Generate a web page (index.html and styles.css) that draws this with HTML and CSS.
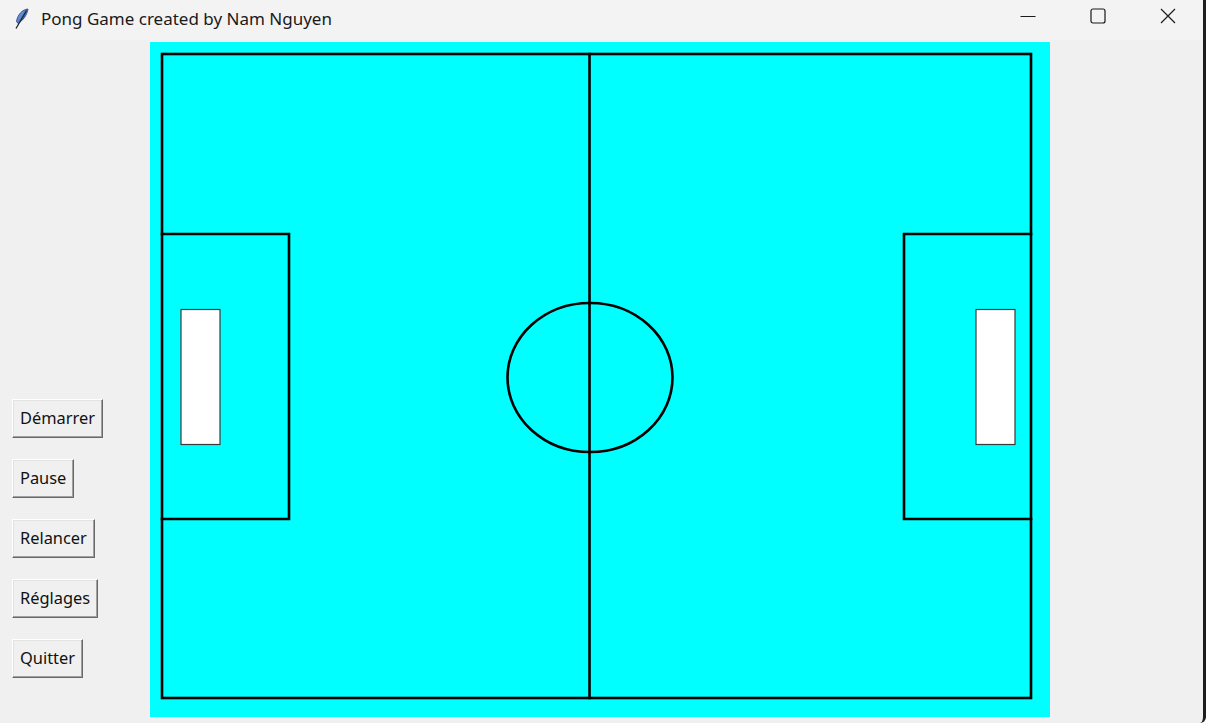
FILE: index.html
```html
<!DOCTYPE html>
<html lang="fr">
<head>
<meta charset="utf-8">
<title>Pong Game created by Nam Nguyen</title>
<link rel="stylesheet" href="styles.css">
</head>
<body>
<div class="window">
  <header class="titlebar">
    <div class="title">
      <svg class="app-icon" width="16" height="22" viewBox="0 0 16 22">
        <defs>
          <linearGradient id="fg" x1="0" y1="0" x2="1" y2="1">
            <stop offset="0" stop-color="#8ab8f5"/>
            <stop offset="1" stop-color="#1f4fa8"/>
          </linearGradient>
        </defs>
        <path d="M15 1 C9 1.5 4.5 7 3.5 13.5 L5 15.5 C10 12.5 14 7 15 1 Z" fill="url(#fg)" stroke="#1b3b7a" stroke-width="0.8"/>
        <path d="M13.5 2.5 L3 20.5" stroke="#222" stroke-width="1.3" fill="none"/>
      </svg>
      <span class="title-text">Pong Game created by Nam Nguyen</span>
    </div>
    <div class="controls">
      <span class="ctl">
        <svg width="16" height="16" viewBox="0 0 16 16"><path d="M0.5 8.5 H15.5" stroke="#1a1a1a" stroke-width="1"/></svg>
      </span>
      <span class="ctl">
        <svg width="16" height="16" viewBox="0 0 16 16"><rect x="1" y="1" width="14" height="14" rx="2" fill="none" stroke="#1a1a1a" stroke-width="1.2"/></svg>
      </span>
      <span class="ctl">
        <svg width="16" height="16" viewBox="0 0 16 16"><path d="M1 1 L15 15 M15 1 L1 15" stroke="#1a1a1a" stroke-width="1.2"/></svg>
      </span>
    </div>
  </header>
  <main class="content">
    <nav class="menu">
      <button class="btn">Démarrer</button>
      <button class="btn">Pause</button>
      <button class="btn">Relancer</button>
      <button class="btn">Réglages</button>
      <button class="btn">Quitter</button>
    </nav>
    <svg class="pitch" width="900" height="675" viewBox="0 0 900 675">
      <rect x="0" y="0" width="900" height="675" fill="#00ffff"/>
      <g stroke="#000" stroke-width="2.6" fill="none" stroke-linecap="square">
        <rect x="12" y="12" width="869" height="644"/>
        <line x1="439.5" y1="12" x2="439.5" y2="656"/>
        <ellipse cx="440" cy="335.5" rx="82.5" ry="74.5"/>
        <polyline points="12,192 139,192 139,477 12,477"/>
        <polyline points="881,192 754,192 754,477 881,477"/>
      </g>
      <rect x="31" y="267.5" width="39" height="135" fill="#fff" stroke="#3a3a3a" stroke-width="1.2"/>
      <rect x="826" y="267.5" width="39" height="135" fill="#fff" stroke="#3a3a3a" stroke-width="1.2"/>
    </svg>
  </main>
</div>
</body>
</html>
```

FILE: styles.css
```css
html, body {
  margin: 0;
  padding: 0;
  width: 1206px;
  height: 723px;
  overflow: hidden;
  background: #ffffff;
}

.window {
  width: 1203px;
  height: 723px;
  background: #f0f0f0;
  border-right: 3px solid #1e1e1e;
  border-bottom-right-radius: 6px;
  display: flex;
  flex-direction: column;
  font-family: "Noto Sans", "Open Sans", sans-serif;
}

.titlebar {
  height: 40px;
  background: #f3f3f3;
  display: flex;
  align-items: center;
  justify-content: space-between;
}

.title {
  display: flex;
  align-items: center;
  padding-left: 13px;
}

.app-icon {
  display: block;
  margin-top: -2px;
}

.title-text {
  margin-left: 12px;
  font-size: 17px;
  color: #1a1a1a;
  margin-top: -3px;
}

.controls {
  display: flex;
  align-items: center;
  height: 100%;
  margin-right: 0;
}

.ctl {
  width: 70px;
  display: flex;
  justify-content: center;
  align-items: center;
  margin-top: -8px;
}

.ctl svg {
  display: block;
}

.content {
  flex: 1;
  display: flex;
  align-items: flex-start;
}

.menu {
  width: 150px;
  display: flex;
  flex-direction: column;
  align-items: flex-start;
  gap: 21px;
  padding-top: 359px;
  padding-left: 12px;
  box-sizing: border-box;
}

.btn {
  height: 39px;
  padding: 0 7px;
  margin: 0;
  background: #f0f0f0;
  font-family: "Noto Sans", "Open Sans", sans-serif;
  font-size: 16.4px;
  color: #111;
  border: 1px solid;
  border-color: #ffffff #696969 #696969 #ffffff;
  box-shadow: inset -1px -1px 0 #a0a0a0, inset 1px 1px 0 #e3e3e3;
  border-radius: 0;
  line-height: 1;
}

.pitch {
  display: block;
  margin-top: 2px;
}
```
